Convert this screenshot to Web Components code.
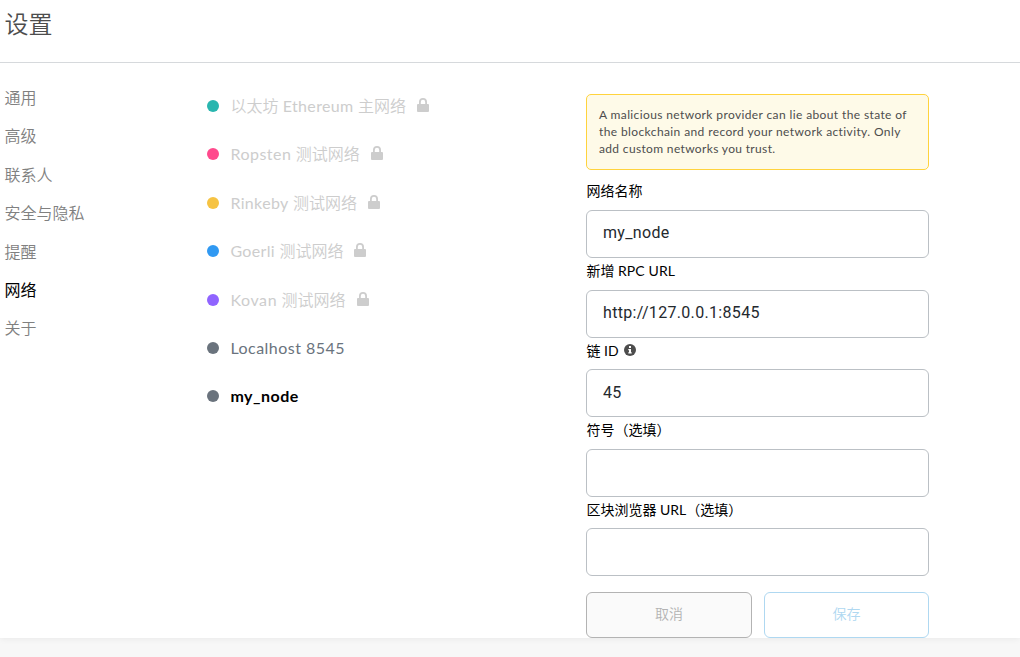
<!DOCTYPE html>
<html lang="zh-CN">
<head>
<meta charset="utf-8">
<title>设置</title>
<style>
html, body { margin: 0; height: 100%; }
body { overflow: hidden; background: #f7f7f7; font-family: Lato, "Noto Sans CJK SC", sans-serif; }
</style>
</head>
<body>
<settings-page></settings-page>
<script>
const define = (name, html, init) => customElements.define(name, class extends HTMLElement {
  constructor() {
    super();
    this.attachShadow({ mode: 'open' }).innerHTML = html;
  }
  connectedCallback() { if (init) init(this, this.shadowRoot); }
});

define('latin-text', `
<style>:host { display: inline; } span { letter-spacing: var(--tracking, 0); font-weight: var(--latin-weight, 400); line-height: 1; }</style><span><slot></slot></span>`,
(el) => el.style.setProperty('--tracking', (el.getAttribute('tracking') || 0) + 'px'));

define('page-header', `
<style>
:host { display: block; box-sizing: border-box; height: 63px; padding: 6px 4.5px 0; border-bottom: 1px solid #d6d9dc; flex: none; }
h1 { margin: 0; font-size: 24px; line-height: 36px; font-weight: 350; color: #4d4d4d; }
</style><h1><slot></slot></h1>`);

define('nav-item', `
<style>
:host { display: flex; align-items: center; height: 38.4px; padding-left: 4.4px; font-size: 16px; font-weight: 350; line-height: 22px; color: #808080; }
:host([active]) { color: #000; font-weight: 400; }
</style><slot></slot>`);

define('network-item', `
<style>
:host { display: flex; align-items: center; height: 48.4px; font-size: 16px; line-height: 22px; font-weight: 350; color: #cdcdcd; white-space: nowrap; }
:host([custom]) { color: #6a737d; font-weight: 400; }
:host([selected]) { color: #000; --latin-weight: 700; }
i { width: 12px; height: 12px; border-radius: 50%; background: var(--dot, #6a737d); margin-right: 11.4px; flex: none; }
svg { display: none; margin: -2px 0 0 11px; }
:host([locked]) svg { display: block; }
</style><i></i><span><slot></slot></span>
<svg width="12" height="14" viewBox="0 0 12 14"><path fill="#cdcdcd" fill-rule="evenodd" d="M1 6H2V4a4 4 0 0 1 8 0V6H11a1 1 0 0 1 1 1v6a1 1 0 0 1-1 1H1a1 1 0 0 1-1-1V7a1 1 0 0 1 1-1ZM3.8 6H8.2V4a2.2 2.2 0 0 0-4.4 0Z"/></svg>`,
(el) => { if (el.getAttribute('color')) el.style.setProperty('--dot', el.getAttribute('color')); });

define('warning-box', `
<style>
:host { display: block; box-sizing: border-box; height: 76px; padding: 11px 12px; border: 1px solid #ffd33d; border-radius: 5px; background: #fefae8; font-size: 12px; line-height: 17px; color: #4d4d4d; white-space: nowrap; }
</style><slot></slot>`);

define('form-field', `
<style>
:host { display: flex; flex-direction: column; height: 79.6px; }
.label { display: flex; align-items: center; height: 31.6px; box-sizing: border-box; padding: 0 0 5.6px .4px; font-size: 14px; line-height: 20px; color: #000; white-space: nowrap; }
input { box-sizing: border-box; width: 100%; height: 48px; margin: 0; padding: 0 16px 2px; border: 1px solid #bbc0c5; border-radius: 6px; background: #fff; color: #24292e; font: 16px Roboto, sans-serif; letter-spacing: .32px; outline: none; }
svg { display: none; margin: -1px 0 0 5px; }
:host([info]) svg { display: block; }
</style>
<div class="label"><span><slot></slot></span><svg width="12" height="12" viewBox="0 0 12 12"><circle cx="6" cy="6" r="6" fill="#4d4d4d"/><path fill="#fff" d="M5 2h2v2H5ZM4.3 5H7v3.2h.7v1.3H4.3V8.2H5V6.2h-.7Z"/></svg></div>
<input type="text">`,
(el, root) => { root.querySelector('input').value = el.getAttribute('value') || ''; });

define('action-button', `
<style>
:host { display: block; }
button { box-sizing: border-box; width: 100%; height: 46px; padding: 0 0 3px; border: 1px solid #b3b3b3; border-radius: 6px; background: #fafafa; color: #b3b3b3; font: inherit; font-size: 14px; font-weight: 350; }
:host([primary]) button { border-color: #afd8f1; background: #fff; color: #afd8f1; }
</style><button><slot></slot></button>`);

define('settings-page', `
<style>
:host { display: flex; flex-direction: column; height: 638px; background: #fff; box-shadow: 0 0 7px rgba(0,0,0,.08); }
main { display: grid; grid-template-columns: 207px 379px 343px; flex: 1; min-height: 0; }
nav { padding-top: 15.8px; }
.networks { padding-top: 18.9px; }
.form { padding-top: 31px; }
warning-box { margin-bottom: 8.4px; }
.actions { display: grid; grid-template-columns: 166px 165px; gap: 12px; padding-top: 15.6px; }
</style>
<page-header>设置</page-header>
<main>
  <nav>
    <nav-item>通用</nav-item><nav-item>高级</nav-item><nav-item>联系人</nav-item><nav-item>安全与隐私</nav-item><nav-item>提醒</nav-item><nav-item active>网络</nav-item><nav-item>关于</nav-item>
  </nav>
  <section class="networks">
    <network-item locked color="#29b6af">以太坊 <latin-text tracking=".35">Ethereum</latin-text> 主网络</network-item>
    <network-item locked color="#ff4a8d"><latin-text tracking=".5">Ropsten</latin-text> 测试网络</network-item>
    <network-item locked color="#f6c343"><latin-text tracking=".35">Rinkeby</latin-text> 测试网络</network-item>
    <network-item locked color="#3099f2"><latin-text tracking=".35">Goerli</latin-text> 测试网络</network-item>
    <network-item locked color="#9064ff"><latin-text tracking=".6">Kovan</latin-text> 测试网络</network-item>
    <network-item custom><latin-text tracking=".48">Localhost 8545</latin-text></network-item>
    <network-item selected><latin-text tracking=".5">my_node</latin-text></network-item>
  </section>
  <section class="form">
    <warning-box><latin-text tracking=".38">A malicious network provider can lie about the state of</latin-text><br><latin-text tracking=".39">the blockchain and record your network activity. Only</latin-text><br><latin-text tracking=".34">add custom networks you trust.</latin-text></warning-box>
    <form-field value="my_node">网络名称</form-field>
    <form-field value="http://127.0.0.1:8545">新增 <latin-text tracking=".1">RPC URL</latin-text></form-field>
    <form-field value="45" info>链 <latin-text>ID</latin-text></form-field>
    <form-field>符号（选填）</form-field>
    <form-field>区块浏览器 <latin-text>URL</latin-text>（选填）</form-field>
    <div class="actions"><action-button>取消</action-button><action-button primary>保存</action-button></div>
  </section>
</main>`);
</script>
</body>
</html>
